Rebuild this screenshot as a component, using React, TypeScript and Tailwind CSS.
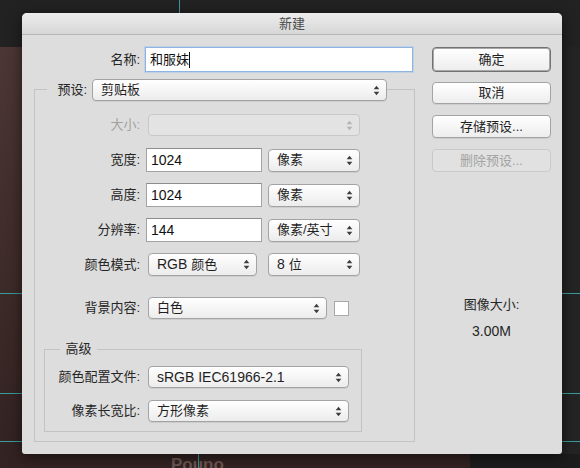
import React from "react";

function Arrows({ disabled }: { disabled?: boolean }) {
  const c = disabled ? "#b3b3b3" : "#3c3c3c";
  return (
    <svg width="7" height="11" viewBox="0 0 7 11" className="shrink-0">
      <path d="M3.5 0.8L6.3 4.2H0.7Z" fill={c} />
      <path d="M0.7 6.8H6.3L3.5 10.2Z" fill={c} />
    </svg>
  );
}

function Select({
  children,
  className = "",
  disabled,
}: {
  children?: React.ReactNode;
  className?: string;
  disabled?: boolean;
}) {
  return (
    <div
      className={`flex shrink-0 items-center justify-between rounded-[4px] border pl-[8px] pr-[6px] ${
        disabled
          ? "border-[#c8c8c8] bg-[#e3e3e3]"
          : "border-[#a3a3a3] bg-linear-to-b from-[#ffffff] to-[#ececec] shadow-[0_1px_0_rgba(0,0,0,0.07)]"
      } ${className}`}
    >
      <span className="text-[13px] leading-[18px] text-[#1f1f1f] whitespace-nowrap">{children}</span>
      <Arrows disabled={disabled} />
    </div>
  );
}

function TextInput({ value, className = "" }: { value: string; className?: string }) {
  return (
    <div
      className={`flex shrink-0 items-center border border-[#a2a2a2] border-t-[#8c8c8c] bg-white pl-[4px] text-[14px] leading-[18px] text-[#111] ${className}`}
    >
      {value}
    </div>
  );
}

function Button({
  children,
  className = "",
  disabled,
  primary,
}: {
  children: React.ReactNode;
  className?: string;
  disabled?: boolean;
  primary?: boolean;
}) {
  return (
    <div
      className={`flex items-center justify-center rounded-[4px] border text-[13px] leading-[18px] ${
        disabled
          ? "border-[#c9c9c9] bg-[#e1e1e1] text-[#a3a3a3]"
          : primary
          ? "border-[#727272] bg-linear-to-b from-[#ffffff] to-[#ededed] text-[#1f1f1f] shadow-[inset_0_0_0_1px_#a8a8a8]"
          : "border-[#a3a3a3] bg-linear-to-b from-[#ffffff] to-[#ededed] text-[#1f1f1f] shadow-[0_1px_0_rgba(0,0,0,0.07)]"
      } ${className}`}
    >
      {children}
    </div>
  );
}

function Label({ children, className = "", disabled }: { children: React.ReactNode; className?: string; disabled?: boolean }) {
  return (
    <span
      className={`shrink-0 text-right text-[13px] leading-[18px] whitespace-nowrap ${
        disabled ? "text-[#a2a2a2]" : "text-[#262626]"
      } ${className}`}
    >
      {children}
    </span>
  );
}

export default function App() {
  return (
    <div className="relative w-[580px] h-[468px] overflow-hidden bg-[#242424] font-['Liberation_Sans','Noto_Sans_CJK_SC',sans-serif]">
      {/* desktop behind the dialog */}
      <div className="absolute left-0 top-0 w-full h-[47px] bg-[#222222]" />
      <div className="absolute left-0 top-[47px] w-[470px] bottom-0 bg-linear-to-b from-[#4b3634] to-[#322221]" />
      <div className="absolute left-[470px] top-[454px] right-0 bottom-0 bg-[#1c1c1c]" />
      <div className="absolute left-[179px] top-0 w-px h-[14px] bg-[#3a9c9e]" />
      <div className="absolute left-[198px] top-[454px] w-px h-[14px] bg-[#3a9c9e]" />
      <div className="absolute left-0 top-[293px] w-[22px] h-px bg-[#3a9c9e]" />
      <div className="absolute left-0 top-[393px] w-[22px] h-px bg-[#3a9c9e]" />
      <div className="absolute left-0 top-[441px] w-[22px] h-px bg-[#3a9c9e]" />
      <div className="absolute right-0 top-[293px] w-[18px] h-px bg-[#3a9c9e]" />
      <div className="absolute right-0 top-[393px] w-[18px] h-px bg-[#3a9c9e]" />
      <div className="absolute right-0 top-[441px] w-[18px] h-px bg-[#3a9c9e]" />
      <div className="absolute left-[171px] top-[456px] text-[17px] font-bold leading-[17px] text-[#6d5653]">Pouno</div>

      {/* dialog window */}
      <div className="absolute left-[22px] top-[13px] w-[540px] h-[441px] flex flex-col overflow-hidden rounded-t-[5px] rounded-b-[3px] bg-[#dddddd] shadow-[0_3px_14px_rgba(0,0,0,0.55)]">
        <div className="h-[22px] shrink-0 flex items-center justify-center border-b border-[#b7b7b7] bg-linear-to-b from-[#ededed] to-[#d7d7d7] text-[13px] text-[#4a4a4a]">
          新建
        </div>

        <div className="flex flex-row pt-[12px]">
          {/* left column */}
          <div className="w-[392px] flex flex-col">
            <div className="flex items-center h-[25px]">
              <Label className="w-[118px]">名称:</Label>
              <div className="ml-[5px] w-[268px] h-[25px] flex items-center border border-[#8db4e2] bg-white pl-[4px] shadow-[0_0_0_1px_rgba(140,185,235,0.35)]">
                <span className="text-[13px] leading-[18px] text-[#111]">和服妹</span>
                <span className="w-px h-[16px] bg-[#111]" />
              </div>
            </div>

            {/* preset group box */}
            <div className="mt-[17px] ml-[12px] w-[381px] flex flex-col border border-[#c3c3c3] pb-[9px]">
              <div className="-mt-[11px] flex items-center h-[22px]">
                <Label className="ml-[12px] w-[45px] pr-[5px] bg-[#dddddd] leading-[22px]">预设:</Label>
                <Select className="w-[295px] h-[22px]">剪贴板</Select>
              </div>

              <div className="mt-[13px] flex items-center h-[22px]">
                <Label disabled className="w-[105px]">大小:</Label>
                <Select disabled className="ml-[8px] w-[212px] h-[22px]" />
              </div>

              <div className="mt-[12px] flex items-center h-[24px]">
                <Label className="w-[105px]">宽度:</Label>
                <TextInput value="1024" className="ml-[6px] w-[116px] h-[24px]" />
                <Select className="ml-[6px] w-[92px] h-[23px]">像素</Select>
              </div>

              <div className="mt-[11px] flex items-center h-[24px]">
                <Label className="w-[105px]">高度:</Label>
                <TextInput value="1024" className="ml-[6px] w-[116px] h-[24px]" />
                <Select className="ml-[6px] w-[92px] h-[23px]">像素</Select>
              </div>

              <div className="mt-[11px] flex items-center h-[24px]">
                <Label className="w-[105px]">分辨率:</Label>
                <TextInput value="144" className="ml-[6px] w-[116px] h-[24px]" />
                <Select className="ml-[6px] w-[92px] h-[23px]">像素/英寸</Select>
              </div>

              <div className="mt-[11px] flex items-center h-[23px]">
                <Label className="w-[105px]">颜色模式:</Label>
                <Select className="ml-[8px] w-[109px] h-[23px]">
                  <span className="text-[14px]">RGB </span>颜色
                </Select>
                <Select className="ml-[11px] w-[92px] h-[23px]">
                  <span className="text-[14px]">8 </span>位
                </Select>
              </div>

              <div className="mt-[21px] flex items-center h-[22px]">
                <Label className="w-[105px]">背景内容:</Label>
                <Select className="ml-[8px] w-[179px] h-[22px]">白色</Select>
                <div className="ml-[7px] w-[15px] h-[15px] border border-[#a9a9a9] bg-white" />
              </div>

              {/* advanced group box */}
              <div className="mt-[30px] ml-[9px] w-[318px] flex flex-col border border-[#c3c3c3] pb-[9px]">
                <div className="-mt-[10px] ml-[15px] w-[37px] h-[18px] bg-[#dddddd] text-center text-[13px] leading-[18px] text-[#262626]">
                  高级
                </div>
                <div className="mt-[8px] flex items-center h-[22px]">
                  <Label className="w-[95px]">颜色配置文件:</Label>
                  <Select className="ml-[8px] w-[201px] h-[22px]">
                    <span className="text-[14px]">sRGB IEC61966-2.1</span>
                  </Select>
                </div>
                <div className="mt-[12px] flex items-center h-[22px]">
                  <Label className="w-[95px]">像素长宽比:</Label>
                  <Select className="ml-[8px] w-[201px] h-[22px]">方形像素</Select>
                </div>
              </div>
            </div>
          </div>

          {/* right column */}
          <div className="ml-[18px] w-[119px] flex flex-col">
            <Button primary className="h-[25px]">确定</Button>
            <Button className="mt-[10px] h-[22px]">取消</Button>
            <Button className="mt-[11px] h-[23px]">存储预设...</Button>
            <Button disabled className="mt-[11px] h-[23px]">删除预设...</Button>
            <div className="mt-[124px] text-center text-[13px] leading-[18px] text-[#262626]">图像大小:</div>
            <div className="mt-[8px] text-center text-[14px] leading-[18px] text-[#262626]">3.00M</div>
          </div>
        </div>
      </div>
    </div>
  );
}
